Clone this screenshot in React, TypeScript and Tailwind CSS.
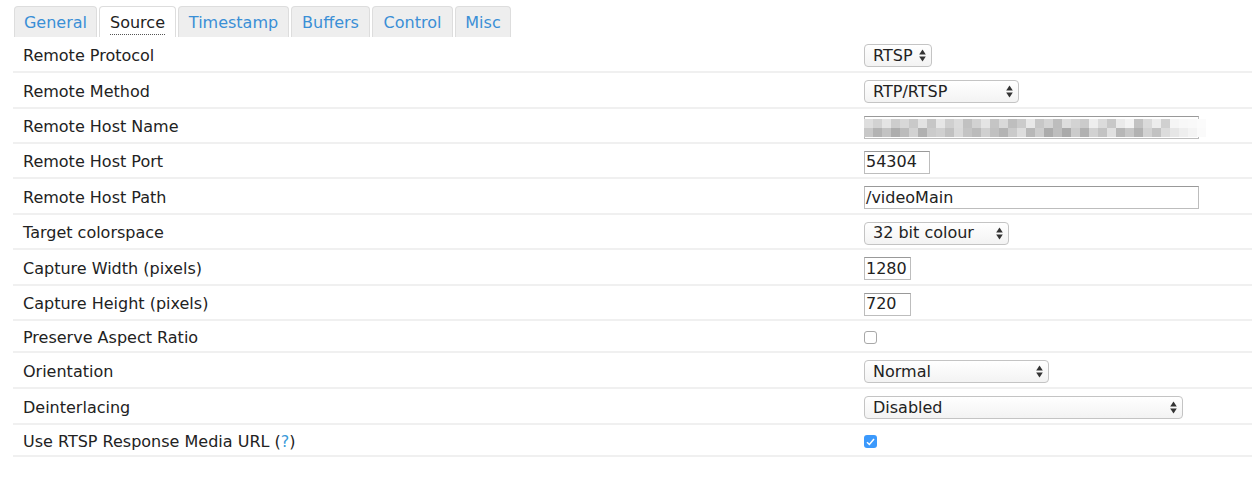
import React from "react";

const TABS = [
  { name: "General", w: "w-[83px]" },
  { name: "Source", w: "w-[77px]" },
  { name: "Timestamp", w: "w-[111px]" },
  { name: "Buffers", w: "w-[79px]" },
  { name: "Control", w: "w-[81px]" },
  { name: "Misc", w: "w-[56px]" },
];

function Arrows() {
  return (
    <svg width="7" height="13" viewBox="0 0 7 13" className="shrink-0">
      <path d="M3.5 0.5 L6.8 5.5 L0.2 5.5 Z" fill="#333" />
      <path d="M3.5 12.5 L6.8 7.5 L0.2 7.5 Z" fill="#333" />
    </svg>
  );
}

function Select({ value, width }: { value: string; width: string }) {
  return (
    <div
      className={`flex h-[23px] items-center justify-between rounded-[4px] border border-[#c4c4c4] bg-gradient-to-b from-[#ffffff] to-[#f3f3f3] pl-[8px] pr-[5px] text-[16px] text-[#222] ${width}`}
    >
      <span>{value}</span>
      <Arrows />
    </div>
  );
}

function Input({ value, width }: { value: string; width: string }) {
  return (
    <div
      className={`flex h-[23px] items-center border border-[#bdbdbd] border-t-[#999] bg-white pl-[1px] text-[16px] text-[#222] ${width}`}
    >
      {value}
    </div>
  );
}

const SHADES = [
  ["#dedede", "#d2d2d2", "#e4e4e4", "#cdcdcd", "#d8d8d8", "#c9c9c9", "#e2e2e2", "#c6c6c6", "#e6e6e6", "#cfcfcf", "#dbdbdb", "#c1c1c1", "#d2d2d2", "#e4e4e4", "#c5c5c5", "#d9d9d9", "#bebebe", "#cbcbcb", "#e8e8e8", "#c7c7c7", "#d4d4d4", "#bdbdbd", "#dddddd", "#d3d3d3", "#cbcbcb", "#eeeeee", "#dbdbdb", "#c8c8c8", "#eaeaea", "#f3f3f3", "#c2c2c2", "#dadada", "#ececec", "#d0d0d0", "#f5f5f5", "#f8f8f8", "#f9f9f9", "#fbfbfb"],
  ["#c8c8c8", "#b3b3b3", "#c3c3c3", "#adadad", "#bcbcbc", "#d2d2d2", "#b1b1b1", "#cbcbcb", "#d0d0d0", "#c1c1c1", "#d9d9d9", "#c4c4c4", "#bbbbbb", "#d0d0d0", "#c1c1c1", "#b4b4b4", "#cacaca", "#dddddd", "#b8b8b8", "#cdcdcd", "#acacac", "#bebebe", "#aaaaaa", "#cbcbcb", "#b1b1b1", "#d2d2d2", "#c3c3c3", "#e0e0e0", "#b7b7b7", "#c7c7c7", "#b2b2b2", "#d2d2d2", "#c2c2c2", "#dcdcdc", "#e6e6e6", "#eeeeee", "#f4f4f4", "#fafafa"],
];

function Blurred() {
  return (
    <div className="relative h-[23px] w-[335px]">
      <div className="absolute inset-0 border border-[#bdbdbd] border-t-[#999]" />
      <div className="absolute left-0 top-[3px] flex flex-col">
        {SHADES.map((row, i) => (
          <div key={i} className="flex">
            {row.map((c, j) => (
              <div key={j} className="h-[9px] w-[9px]" style={{ background: c }} />
            ))}
          </div>
        ))}
      </div>
    </div>
  );
}

function Checkbox({ checked }: { checked?: boolean }) {
  if (checked)
    return (
      <div className="flex h-[13px] w-[13px] items-center justify-center rounded-[3px] bg-[#3b99fc]">
        <svg width="9" height="8" viewBox="0 0 9 8">
          <path d="M1 4.2 L3.4 6.5 L8 1" stroke="#fff" strokeWidth="1.5" fill="none" />
        </svg>
      </div>
    );
  return <div className="h-[13px] w-[13px] rounded-[3px] border border-[#a8a8a8] bg-white" />;
}

type Row = { label: React.ReactNode; control: React.ReactNode; h: string };

const ROWS: Row[] = [
  { label: "Remote Protocol", control: <Select value="RTSP" width="w-[68px]" />, h: "h-[36px]" },
  { label: "Remote Method", control: <Select value="RTP/RTSP" width="w-[155px]" />, h: "h-[36px]" },
  { label: "Remote Host Name", control: <Blurred />, h: "h-[35px]" },
  { label: "Remote Host Port", control: <Input value="54304" width="w-[66px]" />, h: "h-[35px]" },
  { label: "Remote Host Path", control: <Input value="/videoMain" width="w-[335px]" />, h: "h-[36px]" },
  { label: "Target colorspace", control: <Select value="32 bit colour" width="w-[145px]" />, h: "h-[35px]" },
  { label: "Capture Width (pixels)", control: <Input value="1280" width="w-[47px]" />, h: "h-[36px]" },
  { label: "Capture Height (pixels)", control: <Input value="720" width="w-[47px]" />, h: "h-[35px]" },
  { label: "Preserve Aspect Ratio", control: <Checkbox />, h: "h-[32px]" },
  { label: "Orientation", control: <Select value="Normal" width="w-[185px]" />, h: "h-[36px]" },
  { label: "Deinterlacing", control: <Select value="Disabled" width="w-[319px]" />, h: "h-[36px]" },
  {
    label: (
      <>
        Use RTSP Response Media URL (<span className="text-[#3a9ad9]">?</span>)
      </>
    ),
    control: <Checkbox checked />,
    h: "h-[32px]",
  },
];

export default function App() {
  return (
    <div className="min-h-[480px] bg-white font-['DejaVu_Sans',Verdana,sans-serif] text-[#333]">
      <div className="flex gap-[2px] pl-[14px] pt-[6px]">
        {TABS.map((t) => (
          <div
            key={t.name}
            className={
              t.name === "Source"
                ? `flex h-[31px] items-center justify-center rounded-t-[4px] border border-b-0 border-[#ddd] bg-white pt-[2px] text-[16px] text-[#222] ${t.w}`
                : `flex h-[31px] items-center justify-center rounded-t-[4px] border border-b-0 border-[#ddd] bg-[#eeeeee] pt-[2px] text-[16px] text-[#3a8fd6] ${t.w}`
            }
          >
            {t.name === "Source" ? (
              <span className="border-b border-dotted border-[#555] leading-[22px]">{t.name}</span>
            ) : (
              t.name
            )}
          </div>
        ))}
      </div>
      <div className="pl-[13px]">
        {ROWS.map((r, i) => (
          <div key={i} className={`flex items-center border-b-2 border-[#f0f0f0] pt-[3px] ${r.h}`}>
            <div className="w-[851px] pl-[10px] text-[16px] text-[#222]">{r.label}</div>
            <div className="flex flex-1 items-center">{r.control}</div>
          </div>
        ))}
      </div>
    </div>
  );
}
